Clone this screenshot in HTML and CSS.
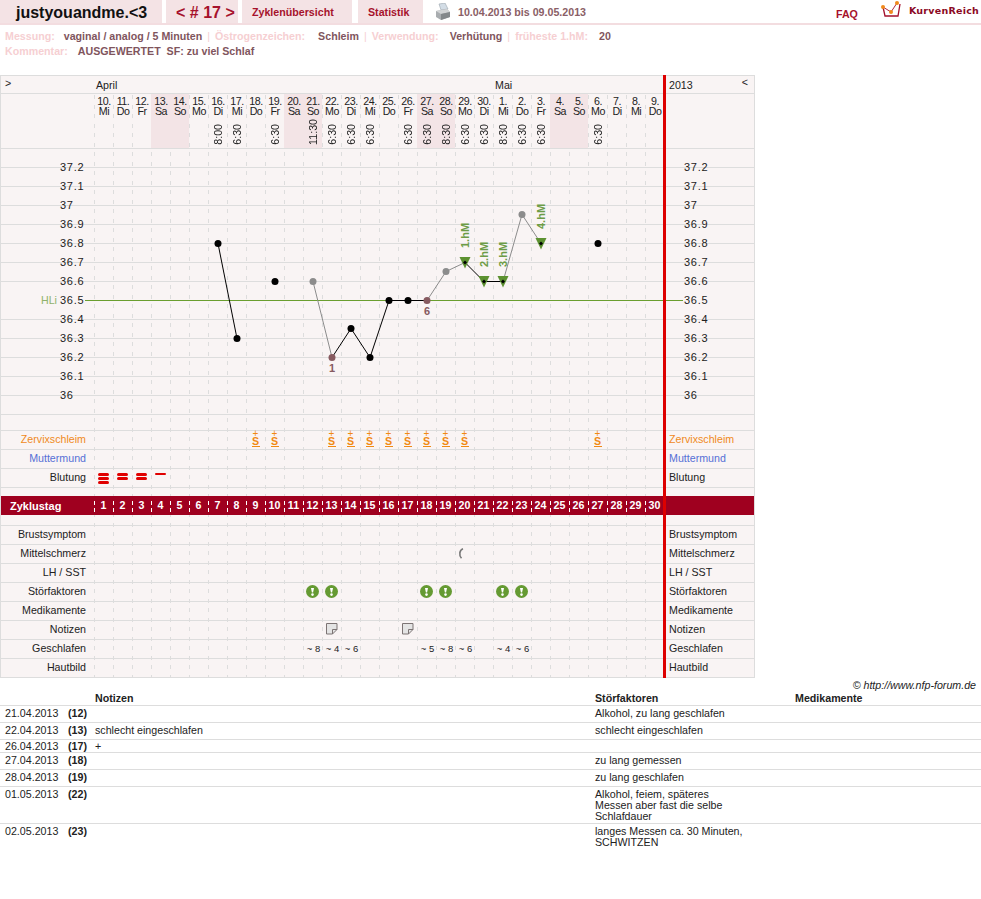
FILE: index.html
```html
<!DOCTYPE html>
<html lang="de">
<head>
<meta charset="UTF-8">
<meta name="viewport" content="width=device-width, initial-scale=1.0">
<title>Zyklus 17</title>
<link rel="stylesheet" href="styles.css">
</head>
<body>

<svg class="defs" width="0" height="0" aria-hidden="true">
<symbol id="alert" viewBox="0 0 13 13">
<circle cx="6.5" cy="6.5" r="6.5" fill="#659a32"/>
<path d="M5 3h3L7.1 7.6H5.9z" fill="#fff"/>
<circle cx="6.5" cy="9.6" r="1.3" fill="#fff"/>
</symbol>
<symbol id="note" viewBox="0 0 12 12">
<path d="M.5.5h10.500v6l-4.500 4.500h-6z" fill="#e4e4e4" stroke="#7c7474"/>
<path d="M11 6.500H6.500V11" fill="none" stroke="#7c7474"/>
</symbol>
</svg>

<div class="topbar">
<div class="tab tab-name">justyouandme.&lt;3</div>
<div class="tab tab-cycle">&lt; # 17 &gt;</div>
<a class="tab tab-link tab-overview" href="#">Zyklenübersicht</a>
<a class="tab tab-link tab-stats" href="#">Statistik</a>
<svg class="printer" width="16" height="17" viewBox="0 0 16 17">
<path d="M4 1l6-1 3 6-7 1z" fill="#d3dde6" stroke="#9aa5ad" stroke-width=".6"/>
<path d="M1 8l11-2 3 3v5l-9 3-5-3z" fill="#a9adb0"/>
<path d="M1 8l5 3 9-2-3-3z" fill="#d2d4d6"/>
<path d="M6 11v6l9-3V9z" fill="#84888b"/>
</svg>
<span class="range">10.04.2013 bis 09.05.2013</span>
<a class="faq" href="#">FAQ</a>
<svg class="logo" width="24" height="18" viewBox="0 0 24 18">
<path d="M3 7l2 9h13l2-12" fill="none" stroke="#a3102c" stroke-width="1.300"/>
<path d="M3 7l8 5 6-9" fill="none" stroke="#a3102c" stroke-width=".9"/>
<circle cx="3" cy="7" r="2" fill="#f08a1c"/>
<circle cx="11" cy="12" r="2" fill="#f08a1c"/>
<circle cx="17" cy="3" r="2" fill="#f08a1c"/>
</svg>
<span class="brand">KurvenReich</span>
</div>

<div class="meta">
<div><span class="k k-tight">Messung:</span><span class="v">vaginal / analog / 5 Minuten</span><span class="sep">|</span><span class="k k-wide">Östrogenzeichen:</span><span class="v">Schleim</span><span class="sep">|</span><span class="k">Verwendung:</span><span class="v">Verhütung</span><span class="sep">|</span><span class="k">früheste 1.hM:</span><span class="v">20</span></div>
<div><span class="k k-mid">Kommentar:</span><span class="v">AUSGEWERTET&nbsp; SF: zu viel Schlaf</span></div>
</div>

<div class="chart">
<div class="dashes"></div>
<div class="redline"></div>

<div class="row row-month">
<span class="lab-l arrow">&gt;</span>
<span class="d1 month">April</span>
<span class="d22 month">Mai</span>
<span class="lab-r year"><span>2013</span><span>&lt;</span></span>
</div>

<div class="row row-dates">
<span class="lab-l"></span>
<div class="day"><span>10.<br>Mi</span></div>
<div class="day"><span>11.<br>Do</span></div>
<div class="day"><span>12.<br>Fr</span></div>
<div class="day we"><span>13.<br>Sa</span></div>
<div class="day we"><span>14.<br>So</span></div>
<div class="day"><span>15.<br>Mo</span></div>
<div class="day"><span>16.<br>Di</span><em>8:00</em></div>
<div class="day"><span>17.<br>Mi</span><em>6:30</em></div>
<div class="day"><span>18.<br>Do</span></div>
<div class="day"><span>19.<br>Fr</span><em>6:30</em></div>
<div class="day we"><span>20.<br>Sa</span></div>
<div class="day we"><span>21.<br>So</span><em>11:30</em></div>
<div class="day"><span>22.<br>Mo</span><em>6:30</em></div>
<div class="day"><span>23.<br>Di</span><em>6:30</em></div>
<div class="day"><span>24.<br>Mi</span><em>6:30</em></div>
<div class="day"><span>25.<br>Do</span></div>
<div class="day"><span>26.<br>Fr</span><em>6:30</em></div>
<div class="day we"><span>27.<br>Sa</span><em>6:30</em></div>
<div class="day we"><span>28.<br>So</span><em>8:30</em></div>
<div class="day"><span>29.<br>Mo</span><em>6:30</em></div>
<div class="day"><span>30.<br>Di</span><em>6:30</em></div>
<div class="day"><span>1.<br>Mi</span><em>8:30</em></div>
<div class="day"><span>2.<br>Do</span><em>6:30</em></div>
<div class="day"><span>3.<br>Fr</span><em>6:30</em></div>
<div class="day we"><span>4.<br>Sa</span></div>
<div class="day we"><span>5.<br>So</span></div>
<div class="day"><span>6.<br>Mo</span><em>6:30</em></div>
<div class="day"><span>7.<br>Di</span></div>
<div class="day"><span>8.<br>Mi</span></div>
<div class="day"><span>9.<br>Do</span></div>
</div>

<svg class="plot" width="754" height="282" viewBox="1 148 754 282">
<g class="gridlines">
<path d="M1 148.500H755M1 167.500H755M1 186.500H755M1 205.500H755M1 224.500H755M1 243.500H755M1 262.500H755M1 281.500H755M1 319.500H755M1 338.500H755M1 357.500H755M1 376.500H755M1 395.500H755M1 414.500H755"/>
</g>
<path class="hili" d="M85 300.500H683"/>
<text class="hili-label" x="41" y="304">HLi</text>
<g class="temps">
<text x="60" y="171">37.2</text><text x="60" y="190">37.1</text><text x="60" y="209">37</text><text x="60" y="228">36.9</text><text x="60" y="247">36.8</text><text x="60" y="266">36.7</text><text x="60" y="285">36.6</text><text x="60" y="304">36.5</text><text x="60" y="323">36.4</text><text x="60" y="342">36.3</text><text x="60" y="361">36.2</text><text x="60" y="380">36.1</text><text x="60" y="399">36</text>
<text x="684" y="171">37.2</text><text x="684" y="190">37.1</text><text x="684" y="209">37</text><text x="684" y="228">36.9</text><text x="684" y="247">36.8</text><text x="684" y="266">36.7</text><text x="684" y="285">36.6</text><text x="684" y="304">36.5</text><text x="684" y="323">36.4</text><text x="684" y="342">36.3</text><text x="684" y="361">36.2</text><text x="684" y="380">36.1</text><text x="684" y="399">36</text>
</g>
<path class="curve-grey" d="M313 281.500L332 357.500M427 300.500L446 271.500L465 262.500M503 281.500L522 214.500L541 243.500"/>
<path class="curve" d="M218 243.500L237 338.500M332 357.500L351 328.500L370 357.500L389 300.500L427 300.500M465 262.500L484 281.500L503 281.500"/>
<g class="tri">
<path d="M459.500 257h11L465 268.500z"/><path d="M478.500 276h11L484 287.500z"/><path d="M497.500 276h11L503 287.500z"/><path d="M535.500 238h11L541 249.500z"/>
</g>
<g class="pt">
<circle cx="218" cy="243.500" r="3.500"/><circle cx="237" cy="338.500" r="3.500"/><circle cx="275" cy="281.500" r="3.500"/><circle cx="351" cy="328.500" r="3.500"/><circle cx="370" cy="357.500" r="3.500"/><circle cx="389" cy="300.500" r="3.500"/><circle cx="408" cy="300.500" r="3.500"/><circle cx="598" cy="243.500" r="3.500"/>
<path d="M465 260.500l2 2-2 2-2-2zM484 279.500l2 2-2 2-2-2zM503 279.500l2 2-2 2-2-2zM541 241.500l2 2-2 2-2-2z"/>
</g>
<g class="pt-grey">
<circle cx="313" cy="281.500" r="3.500"/><circle cx="446" cy="271.500" r="3.500"/><circle cx="522" cy="214.500" r="3.500"/>
</g>
<g class="pt-mark">
<circle cx="332" cy="357.500" r="3.500"/><circle cx="427" cy="300.500" r="3.500"/>
</g>
<text class="count" x="332" y="372">1</text>
<text class="count" x="427" y="315">6</text>
<g class="hm">
<text transform="translate(469 248) rotate(-90)">1.hM</text>
<text transform="translate(488 267) rotate(-90)">2.hM</text>
<text transform="translate(507 267) rotate(-90)">3.hM</text>
<text transform="translate(545 229) rotate(-90)">4.hM</text>
</g>
</svg>

<div class="row">
<span class="lab-l orange">Zervixschleim</span>
<span class="d9 mucus"><i>+</i><b>S</b></span>
<span class="d10 mucus"><i>+</i><b>S</b></span>
<span class="d13 mucus"><i>+</i><b>S</b></span>
<span class="d14 mucus"><i>+</i><b>S</b></span>
<span class="d15 mucus"><i>+</i><b>S</b></span>
<span class="d16 mucus"><i>+</i><b>S</b></span>
<span class="d17 mucus"><i>+</i><b>S</b></span>
<span class="d18 mucus"><i>+</i><b>S</b></span>
<span class="d19 mucus"><i>+</i><b>S</b></span>
<span class="d20 mucus"><i>+</i><b>S</b></span>
<span class="d27 mucus"><i>+</i><b>S</b></span>
<span class="lab-r orange">Zervixschleim</span>
</div>
<div class="row">
<span class="lab-l blue">Muttermund</span>
<span class="lab-r blue">Muttermund</span>
</div>
<div class="row">
<span class="lab-l">Blutung</span>
<span class="d1 bleed"><i></i><i></i><i></i></span>
<span class="d2 bleed"><i></i><i></i></span>
<span class="d3 bleed"><i></i><i></i></span>
<span class="d4 bleed light"><i></i></span>
<span class="lab-r">Blutung</span>
</div>
<div class="row row-gap"></div>

<div class="row row-bar">
<span class="lab-l bar-title">Zyklustag</span>
<div class="bar-num"><span>1</span><span>2</span><span>3</span><span>4</span><span>5</span><span>6</span><span>7</span><span>8</span><span>9</span><span>10</span><span>11</span><span>12</span><span>13</span><span>14</span><span>15</span><span>16</span><span>17</span><span>18</span><span>19</span><span>20</span><span>21</span><span>22</span><span>23</span><span>24</span><span>25</span><span>26</span><span>27</span><span>28</span><span>29</span><span>30</span></div>
</div>
<div class="row-spacer"></div>

<div class="row">
<span class="lab-l">Brustsymptom</span>
<span class="lab-r">Brustsymptom</span>
</div>
<div class="row">
<span class="lab-l">Mittelschmerz</span>
<svg class="d20 ache" width="6" height="11" viewBox="0 0 6 11"><path d="M5 .8C1.500 2 .6 7 3.500 10.200" fill="none" stroke="#777" stroke-width="1.600"/></svg>
<span class="lab-r">Mittelschmerz</span>
</div>
<div class="row">
<span class="lab-l">LH / SST</span>
<span class="lab-r">LH / SST</span>
</div>
<div class="row">
<span class="lab-l">Störfaktoren</span>
<svg class="d12 ico13"><use href="#alert"/></svg>
<svg class="d13 ico13"><use href="#alert"/></svg>
<svg class="d18 ico13"><use href="#alert"/></svg>
<svg class="d19 ico13"><use href="#alert"/></svg>
<svg class="d22 ico13"><use href="#alert"/></svg>
<svg class="d23 ico13"><use href="#alert"/></svg>
<span class="lab-r">Störfaktoren</span>
</div>
<div class="row">
<span class="lab-l">Medikamente</span>
<span class="lab-r">Medikamente</span>
</div>
<div class="row">
<span class="lab-l">Notizen</span>
<svg class="d13 ico12"><use href="#note"/></svg>
<svg class="d17 ico12"><use href="#note"/></svg>
<span class="lab-r">Notizen</span>
</div>
<div class="row">
<span class="lab-l">Geschlafen</span>
<span class="d12 slept">~ 8</span>
<span class="d13 slept">~ 4</span>
<span class="d14 slept">~ 6</span>
<span class="d18 slept">~ 5</span>
<span class="d19 slept">~ 8</span>
<span class="d20 slept">~ 6</span>
<span class="d22 slept">~ 4</span>
<span class="d23 slept">~ 6</span>
<span class="lab-r">Geschlafen</span>
</div>
<div class="row">
<span class="lab-l">Hautbild</span>
<span class="lab-r">Hautbild</span>
</div>
</div>

<div class="credit">© http://www.nfp-forum.de</div>

<table class="notes">
<colgroup><col class="c-date"><col class="c-cd"><col class="c-note"><col class="c-dist"><col></colgroup>
<tr><th></th><th></th><th>Notizen</th><th>Störfaktoren</th><th>Medikamente</th></tr>
<tr><td>21.04.2013</td><td><b>(12)</b></td><td></td><td>Alkohol, zu lang geschlafen</td><td></td></tr>
<tr><td>22.04.2013</td><td><b>(13)</b></td><td>schlecht eingeschlafen</td><td>schlecht eingeschlafen</td><td></td></tr>
<tr class="short"><td>26.04.2013</td><td><b>(17)</b></td><td>+</td><td></td><td></td></tr>
<tr><td>27.04.2013</td><td><b>(18)</b></td><td></td><td>zu lang gemessen</td><td></td></tr>
<tr><td>28.04.2013</td><td><b>(19)</b></td><td></td><td>zu lang geschlafen</td><td></td></tr>
<tr><td>01.05.2013</td><td><b>(22)</b></td><td></td><td>Alkohol, feiem, späteres Messen aber fast die selbe Schlafdauer</td><td></td></tr>
<tr class="last"><td>02.05.2013</td><td><b>(23)</b></td><td></td><td>langes Messen ca. 30 Minuten, SCHWITZEN</td><td></td></tr>
</table>

</body>
</html>
```

FILE: styles.css
```css
body {
    margin: 0;
    font-family: "Liberation Sans", Arial, sans-serif;
    font-size: 10.67px;
    color: #222;
    background-color: #fff;
}

a {
    text-decoration: none;
}

.defs {
    position: absolute;
}

/* top bar */
.topbar {
    display: flex;
    height: 23px;
    border-bottom: 2px solid #f3dde0;
}

.tab {
    background-color: #f4e3e5;
    line-height: 26px;
    box-sizing: border-box;
}

.tab-name {
    width: 162px;
    padding-left: 16px;
    font-size: 16px;
    font-weight: bold;
    color: #111;
}

.tab-cycle {
    width: 72px;
    margin-left: 4px;
    padding-left: 10px;
    font-size: 16px;
    font-weight: bold;
    color: #a6122c;
}

.tab-link {
    padding-left: 10px;
    font-weight: bold;
    line-height: 25px;
    color: #a6122c;
}

.tab-overview {
    width: 110px;
    margin-left: 4px;
}

.tab-stats {
    width: 65px;
    margin-left: 6px;
}

.printer {
    margin: 3px 0 0 12px;
}

.range {
    margin-left: 7px;
    line-height: 25px;
    font-weight: bold;
    color: #8a5e66;
}

.faq {
    margin-left: 250px;
    line-height: 29px;
    font-weight: bold;
    color: #a6122c;
}

.logo {
    margin: 0 0 0 22px;
}

.brand {
    margin-left: 5px;
    font-family: "DejaVu Sans", sans-serif;
    font-size: 9.5px;
    font-weight: bold;
    line-height: 21px;
    letter-spacing: 0.25px;
    color: #8b0a24;
}

/* cycle info */
.meta {
    height: 46px;
    padding: 4px 0 0 5px;
    line-height: 15px;
    font-weight: bold;
}

.k {
    margin-right: 11px;
    color: #f6cfd2;
}

.k-tight {
    margin-right: 9px;
}

.k-mid {
    margin-right: 10px;
}

.k-wide {
    margin-right: 13px;
}

.v {
    margin-right: 5px;
    color: #7f555d;
}

.sep {
    margin-right: 5px;
    color: #f6cfd2;
    font-weight: normal;
}

/* chart panel */
.chart {
    position: relative;
    isolation: isolate;
    width: 755px;
    box-sizing: border-box;
    border: 1px solid #ddd;
    background-color: #f9f4f4;
}

.dashes {
    position: absolute;
    z-index: -1;
    left: 93px;
    top: 17px;
    bottom: 0;
    width: 571px;
    background: linear-gradient(to right, #ddd 1px, transparent 1px) 0 0 / 19px 100%;
    -webkit-mask: linear-gradient(#000 4px, transparent 4px, transparent 9px, #000 9px, #000 13px, transparent 13px) 0 12px / 100% 19px;
    mask: linear-gradient(#000 4px, transparent 4px, transparent 9px, #000 9px, #000 13px, transparent 13px) 0 12px / 100% 19px;
}

.redline {
    position: absolute;
    z-index: 1;
    left: 662px;
    top: -1px;
    bottom: -1px;
    width: 3px;
    background-color: #dd0000;
}

.row {
    display: grid;
    grid-template-columns: 93px repeat(30, 19px) 1fr;
    grid-template-rows: 16px;
    align-items: center;
    height: 19px;
    box-sizing: border-box;
    border-top: 1px solid #ddd;
}

.lab-l {
    grid-column: 1;
    padding-right: 8px;
    text-align: right;
}

.lab-r {
    grid-column: 32;
    padding-left: 5px;
}

.orange {
    color: #f08a1c;
}

.blue {
    color: #5670d6;
}

.d1 { grid-column: 2; }
.d2 { grid-column: 3; }
.d3 { grid-column: 4; }
.d4 { grid-column: 5; }
.d9 { grid-column: 10; }
.d10 { grid-column: 11; }
.d12 { grid-column: 13; }
.d13 { grid-column: 14; }
.d14 { grid-column: 15; }
.d15 { grid-column: 16; }
.d16 { grid-column: 17; }
.d17 { grid-column: 18; }
.d18 { grid-column: 19; }
.d19 { grid-column: 20; }
.d20 { grid-column: 21; }
.d22 { grid-column: 23; }
.d23 { grid-column: 24; }
.d27 { grid-column: 28; }

/* month and date headers */
.row-month {
    height: 17px;
    border-top: 0;
    grid-template-rows: 17px;
}

.arrow {
    padding: 0 0 0 4px;
    text-align: left;
    margin-top: -3px;
}

.month {
    padding-left: 2px;
    white-space: nowrap;
    margin-top: 1px;
}

.year {
    display: flex;
    justify-content: space-between;
    padding-right: 6px;
    margin-top: 1px;
}

.year span:last-child {
    margin-top: -3px;
}

.row-dates {
    height: 55px;
    grid-template-rows: 54px;
    align-items: stretch;
}

.day {
    display: flex;
    flex-direction: column;
    align-items: center;
    padding: 3px 0 0 1px;
    line-height: 9.5px;
    text-align: center;
    letter-spacing: -0.5px;
}

.day.we {
    background-color: #f3e4e6;
}

.day em {
    margin: auto 0 3px;
    font-style: normal;
    font-size: 10.67px;
    line-height: 11px;
    letter-spacing: 0;
    writing-mode: vertical-rl;
    transform: rotate(180deg);
}

/* plot */
.plot {
    display: block;
}

.gridlines path {
    fill: none;
    stroke: #ddd;
}

.hili {
    fill: none;
    stroke: #6a9e2f;
}

.hili-label {
    font-size: 10.67px;
    fill: #8fb26b;
}

.temps text {
    font-size: 11px;
    letter-spacing: 0.7px;
    fill: #222;
}

.curve {
    fill: none;
    stroke: #000;
    stroke-width: 1;
}

.curve-grey {
    fill: none;
    stroke: #8c8c8c;
    stroke-width: 1;
}

.tri path {
    fill: #5c9130;
}

.pt circle,
.pt path {
    fill: #000;
}

.pt-grey circle {
    fill: #8c8c8c;
}

.pt-mark circle {
    fill: #875a60;
}

.count {
    font-size: 11px;
    font-weight: bold;
    text-anchor: middle;
    fill: #875a60;
}

.hm text {
    font-size: 11px;
    font-weight: bold;
    fill: #6c9c46;
}

/* symbol rows */
.mucus {
    display: flex;
    flex-direction: column;
    align-items: center;
    color: #f08a14;
}

.mucus i {
    height: 6px;
    font-style: normal;
    font-size: 10px;
    line-height: 6px;
}

.mucus b {
    width: 8px;
    height: 9px;
    border-bottom: 1px solid #f08a14;
    font-size: 10.67px;
    font-weight: bold;
    line-height: 8px;
    text-align: center;
}

.bleed {
    align-self: start;
    justify-self: center;
    margin-top: 4px;
    width: 11px;
}

.bleed i {
    display: block;
    height: 3px;
    margin-bottom: 1px;
    border-radius: 2px;
    background-color: #e00000;
}

.bleed.light i {
    height: 2px;
}

.ache {
    justify-self: start;
    margin-left: 3px;
}

.ico13 {
    width: 13px;
    height: 13px;
    justify-self: center;
    margin-left: -1px;
}

.ico12 {
    width: 12px;
    height: 12px;
    justify-self: center;
}

.slept {
    font-size: 9.5px;
    text-align: center;
    white-space: nowrap;
    margin-left: 2px;
}

.row-gap {
    height: 9px;
    grid-template-rows: 8px;
}

.row-spacer {
    height: 10px;
}

/* Zyklustag bar */
.row-bar {
    border-top: 0;
    grid-template-rows: 19px;
    background-color: #9f001f;
    color: #fff;
    font-weight: bold;
}

.bar-title {
    padding: 0 0 0 9px;
    text-align: left;
    font-size: 11px;
}

.bar-num {
    position: relative;
    grid-column: 2 / span 30;
    display: grid;
    grid-template-columns: repeat(30, 19px);
    height: 19px;
    line-height: 19px;
    text-align: center;
}

.bar-num::before {
    content: "";
    position: absolute;
    inset: 0;
    background: linear-gradient(to right, #fff 1px, transparent 1px) 0 0 / 19px 100%;
    -webkit-mask: linear-gradient(transparent 5px, #000 5px, #000 9px, transparent 9px, transparent 12px, #000 12px, #000 16px, transparent 16px);
    mask: linear-gradient(transparent 5px, #000 5px, #000 9px, transparent 9px, transparent 12px, #000 12px, #000 16px, transparent 16px);
}

/* notes table */
.credit {
    height: 14px;
    padding-right: 5px;
    line-height: 14px;
    text-align: right;
    font-style: italic;
}

.notes {
    width: 981px;
    table-layout: fixed;
    border-collapse: separate;
    border-spacing: 0;
    line-height: 11px;
}

.c-date { width: 68px; }
.c-cd { width: 27px; }
.c-note { width: 500px; }
.c-dist { width: 200px; }

.notes th {
    height: 13px;
    padding: 0;
    border-bottom: 1px solid #ddd;
    font-weight: bold;
    text-align: left;
}

.notes td {
    height: 17px;
    padding: 2px 0 1px;
    box-sizing: border-box;
    border-bottom: 1px solid #ddd;
    vertical-align: top;
}

.notes td:nth-child(1) {
    padding-left: 5px;
}

.notes td:nth-child(4) {
    padding-right: 50px;
}

.notes tr.short td {
    height: 13px;
    padding: 1px 0 0;
}

.notes tr.short td:nth-child(1) {
    padding-left: 5px;
}

.notes tr.last td {
    border-bottom: 0;
}
```
